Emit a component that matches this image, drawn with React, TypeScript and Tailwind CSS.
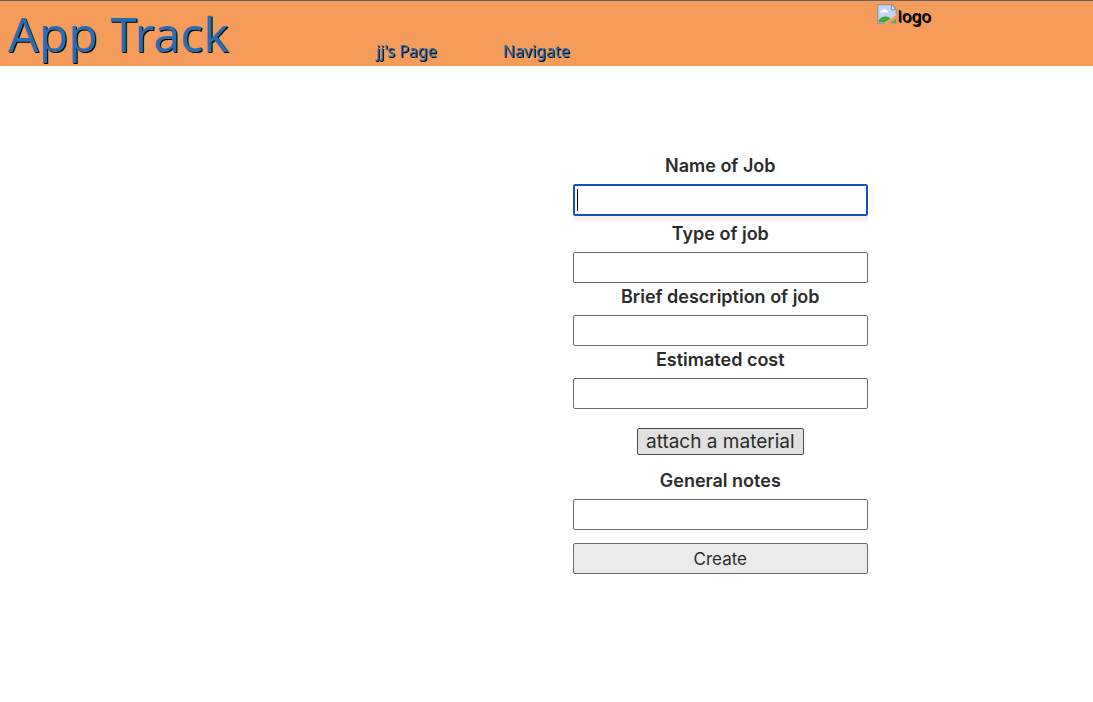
import { useState } from "react";

function BrokenImageIcon() {
  return (
    <svg width="20" height="20" viewBox="0 0 20 20" aria-hidden="true">
      <path d="M0.7 0.7H14.5L19.3 5.5V11L8 19.3H0.7Z" fill="#c3d6f3" />
      <path d="M3.5 8.5C3 6.5 5 6 5.5 6.5C6 4.5 9 4.5 9.5 6.5C11 6.3 11.5 8 10.5 8.5Z" fill="#fff" />
      <path d="M1.5 18.5V16.5C4 12.5 9 11 13.5 14.5L8 18.5Z" fill="#46a33a" />
      <path d="M14.5 0.7V5.5H19.3Z" fill="#fff" />
      <path d="M19.3 11V5.5L14.5 0.7H0.7V19.3H8M14.5 0.7V5.5H19.3" fill="none" stroke="#9a9a9a" strokeWidth="1.3" />
      <path d="M19.3 14.5V19.3H13Z" fill="#57a844" stroke="#a3a08e" strokeWidth="0.8" />
      <path d="M20 10.5L7.5 20H12L20 14Z" fill="#f59c5b" />
    </svg>
  );
}

function Field({ id, label, autoFocus = false }: { id: string; label: string; autoFocus?: boolean }) {
  const [value, setValue] = useState("");
  const [focused, setFocused] = useState(autoFocus);
  return (
    <div className="flex flex-col gap-1">
      <label htmlFor={id} className="text-center text-lg leading-7 font-semibold">
        {label}
      </label>
      <div className="relative flex">
        <input
          id={id}
          type="text"
          value={value}
          autoFocus={autoFocus}
          onChange={(e) => setValue(e.target.value)}
          onFocus={() => setFocused(true)}
          onBlur={() => setFocused(false)}
          className="h-[31px] w-full rounded-xs border border-[#6b6b6b] bg-white px-[3px] text-lg outline-none placeholder-shown:caret-transparent focus:h-8 focus:border-[#1250bd] focus:shadow-[0_5px_0_#faf0f3] focus:inset-ring-1 focus:inset-ring-[#1250bd]"
          placeholder=" "
        />
        {focused && value === "" && (
          <span aria-hidden="true" className="pointer-events-none absolute inset-y-[5px] left-1 w-px bg-black" />
        )}
      </div>
    </div>
  );
}

export default function App() {
  return (
    <div className="min-h-screen bg-white font-['Inter',sans-serif] text-[#2b2b2b]">
      <header className="flex h-[66px] border-t border-[#6b605e] bg-[#f59c5b] font-['Noto_Sans',sans-serif] text-[#2b6cb0] [text-shadow:1px_1px_#000]">
        <h1 className="w-[34.4%] pl-2 text-5xl leading-[66px]">
          <a href="#home">App Track</a>
        </h1>
        <nav className="flex w-[45.8%] items-end gap-[66px] pb-[5px] text-base leading-5">
          <a href="#page">jj's Page</a>
          <a href="#navigate">Navigate</a>
        </nav>
        <div className="flex items-start gap-px pt-[3px] text-base leading-6 text-black">
          <BrokenImageIcon />
          <span>logo</span>
        </div>
      </header>
      <main className="ml-[52.4%] w-[27%] pt-[86px]">
        <form className="flex flex-col" onSubmit={(e) => e.preventDefault()}>
          <div className="mb-1">
            <Field id="name" label="Name of Job" autoFocus />
          </div>
          <Field id="type" label="Type of job" />
          <Field id="description" label="Brief description of job" />
          <Field id="cost" label="Estimated cost" />
          <button
            type="button"
            className="mt-[19px] mb-3 h-[27px] self-center rounded-xs border border-[#4a4a4a] bg-[#e0e0e0] px-2 text-[19px] leading-6"
          >
            attach a material
          </button>
          <Field id="notes" label="General notes" />
          <button type="submit" className="mt-[13px] h-[31px] rounded-xs border border-[#6b6b6b] bg-[#ebebeb] text-[17px] leading-7">
            Create
          </button>
        </form>
      </main>
    </div>
  );
}
